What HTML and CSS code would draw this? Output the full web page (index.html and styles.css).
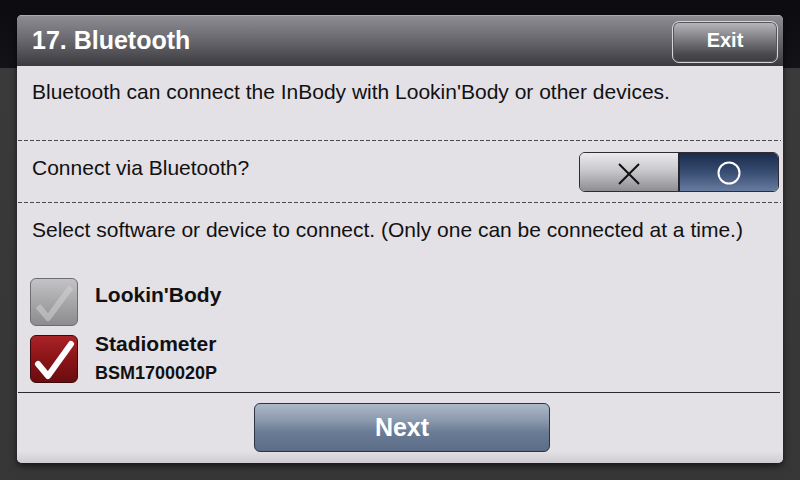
FILE: index.html
```html
<!DOCTYPE html>
<html>
<head>
<meta charset="utf-8">
<link rel="stylesheet" href="styles.css">
</head>
<body>
<div class="dialog">
  <div class="header">
    <div class="title">17. Bluetooth</div>
    <div class="exit">Exit</div>
  </div>
  <div class="intro">Bluetooth can connect the InBody with Lookin'Body or other devices.</div>
  <div class="dash"></div>
  <div class="connect">
    <div class="label">Connect via Bluetooth?</div>
    <div class="toggle">
      <div class="tg tg-off">
        <svg width="24" height="24" viewBox="0 0 24 24"><path d="M2 2 L22 22 M22 2 L2 22" stroke="#111" stroke-width="2" fill="none"/></svg>
      </div>
      <div class="tg tg-on">
        <svg width="26" height="26" viewBox="0 0 26 26"><circle cx="13" cy="13" r="10.5" stroke="#fff" stroke-width="2" fill="none"/></svg>
      </div>
    </div>
  </div>
  <div class="dash"></div>
  <div class="select">
    <div class="label">Select software or device to connect. (Only one can be connected at a time.)</div>
    <div class="items">
      <div class="item item-1">
        <div class="cb cb-off">
          <svg width="48" height="48" viewBox="0 0 48 48"><path d="M8 28 L18 40 L41 9" stroke="#d2d1d4" stroke-opacity="0.55" stroke-width="6" fill="none" stroke-linejoin="round"/></svg>
        </div>
        <div class="name">Lookin'Body</div>
      </div>
      <div class="item item-2">
        <div class="cb cb-on">
          <svg width="48" height="48" viewBox="0 0 48 48"><path d="M8 29 L18 41 L41 9" stroke="#fff" stroke-width="6" fill="none" stroke-linejoin="round" stroke-linecap="round"/></svg>
        </div>
        <div class="name">Stadiometer<div class="serial">BSM1700020P</div></div>
      </div>
    </div>
  </div>
  <div class="rule"></div>
  <div class="footer">
    <div class="next">Next</div>
  </div>
</div>
</body>
</html>
```
FILE: styles.css
```css
html, body {
  margin: 0;
  padding: 0;
}
body {
  width: 800px;
  height: 480px;
  overflow: hidden;
  background: linear-gradient(to bottom, #0c0c10 0, #131317 68px, #3a3a3a 68px, #363636 480px);
  font-family: "Liberation Sans", Arial, sans-serif;
  color: #111;
}
.dialog {
  margin: 15px 0 0 17px;
  width: 766px;
  height: 448px;
  border-radius: 5px;
  overflow: hidden;
  background: #e3e0e6;
  display: flex;
  flex-direction: column;
  box-shadow: 0 3px 6px rgba(0,0,0,0.6);
}
.header {
  height: 51px;
  box-sizing: border-box;
  border-top: 1px solid #a9a8ae;
  background: linear-gradient(to bottom, #8d8c92 0%, #6b6a70 45%, #3b3a3f 100%);
  display: flex;
  align-items: center;
  justify-content: space-between;
  padding: 0 5px 0 15px;
}
.title {
  color: #fff;
  font-weight: bold;
  font-size: 25px;
  line-height: 30px;
  margin-top: -3px;
}
.exit {
  width: 106px;
  height: 42px;
  box-sizing: border-box;
  margin-top: 1px;
  border: 1px solid #d6d5d9;
  border-radius: 7px;
  background: linear-gradient(to bottom, #b9b8bc 0%, #7a797d 45%, #4a494d 80%, #3c3b3f 100%);
  color: #fff;
  font-weight: bold;
  font-size: 20px;
  display: flex;
  align-items: center;
  justify-content: center;
  padding-bottom: 2px;
  box-shadow: inset 0 0 0 1px #555;
}
.intro {
  height: 74px;
  box-sizing: border-box;
  padding: 14px 0 0 15px;
  font-size: 21px;
  line-height: 24px;
}
.dash {
  height: 1px;
  margin: 0 2px 0 1px;
  background: repeating-linear-gradient(to right, #4a4a4a 0, #4a4a4a 4px, transparent 4px, transparent 6px);
}
.label {
  font-size: 21px;
  line-height: 24px;
  padding: 15px 0 0 15px;
}
.connect {
  height: 61px;
  display: flex;
  justify-content: space-between;
  align-items: flex-start;
}
.toggle {
  margin: 11px 4px 0 0;
  width: 200px;
  height: 40px;
  box-sizing: border-box;
  border: 1px solid #2d2d33;
  border-radius: 6px;
  overflow: hidden;
  display: flex;
}
.tg {
  flex: 1;
  display: flex;
  align-items: center;
  justify-content: center;
}
.tg-off {
  background: linear-gradient(to bottom, #ebeaed 0%, #c9c8cc 45%, #8e8d92 100%);
  border-right: 2px solid #26262c;
}
.tg-off svg { margin-top: 4px; }
.tg-on {
  background: linear-gradient(to bottom, #1a2b4a 0%, #34496e 45%, #667b9e 100%);
}
.tg-on svg { margin-top: 1px; }
.select {
  height: 189px;
}
.items {
  margin-top: 36px;
  display: flex;
  flex-direction: column;
  gap: 9px;
}
.item {
  display: flex;
  align-items: flex-start;
  padding-left: 13px;
}
.cb {
  width: 48px;
  height: 48px;
  box-sizing: border-box;
  border-radius: 6px;
  flex: none;
  position: relative;
}
.cb svg {
  position: absolute;
  left: -1px;
  top: -1px;
}
.cb-off {
  border: 1px solid #6d6c70;
  background: linear-gradient(to bottom, #c3c2c5 0%, #a7a6a9 50%, #8c8b8e 100%);
}
.cb-on {
  border: 1px solid #3a0a0c;
  background: linear-gradient(to bottom, #a92226 0%, #8a1417 50%, #6a0c0f 100%);
}
.name {
  margin-left: 17px;
  font-weight: bold;
  font-size: 21px;
  line-height: 24px;
}
.item-1 .name { padding-top: 5px; }
.item-2 .name { margin-top: -3px; }
.serial {
  font-size: 18px;
  line-height: 24px;
  margin-top: 5px;
}
.rule {
  height: 1px;
  margin: 0 3px 0 1px;
  background: #2c2c30;
}
.footer {
  flex: 1;
  display: flex;
  justify-content: center;
  align-items: flex-start;
  padding-top: 10px;
  background: linear-gradient(to bottom, #e3e0e6 0, #e3e0e6 58px, #cfcdd1 70px);
}
.next {
  margin-left: 4px;
  width: 296px;
  height: 49px;
  box-sizing: border-box;
  border: 1px solid #2c3444;
  border-radius: 6px;
  background: linear-gradient(to bottom, #adb9c8 0%, #8a99ad 35%, #6a7b95 60%, #5c6d88 100%);
  color: #fff;
  font-weight: bold;
  font-size: 25px;
  display: flex;
  align-items: center;
  justify-content: center;
}
```
